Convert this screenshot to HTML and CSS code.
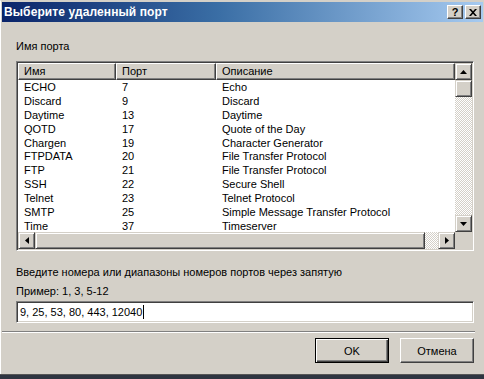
FILE: index.html
```html
<!DOCTYPE html>
<html lang="ru">
<head>
<meta charset="utf-8">
<title>Выберите удаленный порт</title>
<link rel="stylesheet" href="styles.css">
</head>
<body>
<div class="window">
  <div class="titlebar">
    <span class="title">Выберите удаленный порт</span>
    <div class="tbtns">
      <span class="tbtn help">?</span>
      <span class="tbtn close">
        <svg width="8" height="7" viewBox="0 0 8 7"><path d="M0 0h2l2 2.2L6 0h2L5 3.5 8 7H6L4 4.8 2 7H0l3-3.5z" fill="#000"/></svg>
      </span>
    </div>
  </div>
  <div class="content">
    <div class="label first">Имя порта</div>
    <div class="listbox">
      <div class="listarea">
        <div class="grid">
          <div class="hdr">Имя</div><div class="hdr">Порт</div><div class="hdr">Описание</div>
          <div>ECHO</div><div>7</div><div>Echo</div>
          <div>Discard</div><div>9</div><div>Discard</div>
          <div>Daytime</div><div>13</div><div>Daytime</div>
          <div>QOTD</div><div>17</div><div>Quote of the Day</div>
          <div>Chargen</div><div>19</div><div>Character Generator</div>
          <div>FTPDATA</div><div>20</div><div>File Transfer Protocol</div>
          <div>FTP</div><div>21</div><div>File Transfer Protocol</div>
          <div>SSH</div><div>22</div><div>Secure Shell</div>
          <div>Telnet</div><div>23</div><div>Telnet Protocol</div>
          <div>SMTP</div><div>25</div><div>Simple Message Transfer Protocol</div>
          <div>Time</div><div>37</div><div>Timeserver</div>
        </div>
        <div class="vscroll">
          <div class="sbtn"><svg width="7" height="4" viewBox="0 0 7 4"><path d="M3.5 0L7 4H0z" fill="#000"/></svg></div>
          <div class="sthumb"></div>
          <div class="strack"></div>
          <div class="sbtn"><svg width="7" height="4" viewBox="0 0 7 4"><path d="M0 0h7L3.5 4z" fill="#000"/></svg></div>
        </div>
      </div>
      <div class="hrow">
        <div class="hscroll">
          <div class="sbtn"><svg width="4" height="7" viewBox="0 0 4 7"><path d="M4 0v7L0 3.5z" fill="#000"/></svg></div>
          <div class="hthumb"></div>
          <div class="htrack"></div>
          <div class="sbtn"><svg width="4" height="7" viewBox="0 0 4 7"><path d="M0 0l4 3.5L0 7z" fill="#000"/></svg></div>
        </div>
        <div class="corner"></div>
      </div>
    </div>
    <div class="label second">Введите номера или диапазоны номеров портов через запятую</div>
    <div class="label third">Пример: 1, 3, 5-12</div>
    <div class="input"><span>9, 25, 53, 80, 443, 12040</span><span class="caret"></span></div>
  </div>
  <div class="separator"></div>
  <div class="buttons">
    <div class="btn default"><span>OK</span></div>
    <div class="btn"><span>Отмена</span></div>
  </div>
</div>
<div class="taskbar"></div>
</body>
</html>
```
FILE: styles.css
```css
* { box-sizing: border-box; }
html, body { margin: 0; padding: 0; }
body {
  width: 484px;
  height: 379px;
  overflow: hidden;
  background: #d4d0c8;
  font-family: "Liberation Sans", Arial, sans-serif;
  font-size: 11px;
  color: #000;
}
.window {
  height: 374px;
  background: #d4d0c8;
  border-top: 1px solid #d4d0c8;
  border-left: 1px solid #fff;
  display: flex;
  flex-direction: column;
}
.titlebar {
  margin: 1px 1px 0 1px;
  height: 20px;
  background: linear-gradient(to right, #0a246a 0%, #3a6ea5 45%, #a6caf0 100%);
  display: flex;
  align-items: center;
  justify-content: space-between;
  padding: 0 2px 0 2px;
}
.title {
  color: #fff;
  font-family: "Liberation Sans", Arial, sans-serif;
  font-weight: bold;
  font-size: 12px;
  letter-spacing: 0.1px;
}
.tbtns { display: flex; gap: 2px; }
.tbtn {
  width: 16px;
  height: 14px;
  background: #d4d0c8;
  border: 1px solid;
  border-color: #fff #404040 #404040 #fff;
  box-shadow: inset -1px -1px 0 #808080;
  display: flex;
  align-items: center;
  justify-content: center;
  font-weight: bold;
  font-size: 11px;
  line-height: 1;
}
.content { padding: 0 9px 0 15px; }
.label { height: 13px; line-height: 13px; white-space: nowrap; }
.label.first { margin-top: 18px; }
.listbox {
  margin-top: 8px;
  width: 458px;
  height: 190px;
  border: 1px solid;
  border-color: #808080 #fff #fff #808080;
  box-shadow: inset 1px 1px 0 #404040, inset -1px -1px 0 #d4d0c8;
  padding: 1px;
  background: #fff;
  display: flex;
  flex-direction: column;
}
.listarea { flex: 1; display: flex; overflow: hidden; }
.grid {
  flex: 1;
  display: grid;
  grid-template-columns: 98px 100px 1fr;
  grid-auto-rows: 13.9px;
  align-content: start;
  overflow: hidden;
  white-space: nowrap;
}
.grid > div { padding-left: 6px; line-height: 14px; overflow: hidden; }
.grid > .hdr {
  height: 17px;
  line-height: 15px;
  background: #d4d0c8;
  border: 1px solid;
  border-color: #fff #404040 #404040 #fff;
  box-shadow: inset -1px -1px 0 #808080;
  padding-left: 5px;
}
.grid { grid-template-rows: 17px; }
.vscroll {
  width: 17px;
  display: flex;
  flex-direction: column;
}
.sbtn {
  width: 17px;
  height: 17px;
  flex: none;
  background: #d4d0c8;
  border: 1px solid;
  border-color: #d4d0c8 #404040 #404040 #d4d0c8;
  box-shadow: inset 1px 1px 0 #fff, inset -1px -1px 0 #808080;
  display: flex;
  align-items: center;
  justify-content: center;
}
.sthumb, .hthumb {
  flex: none;
  background: #d4d0c8;
  border: 1px solid;
  border-color: #d4d0c8 #404040 #404040 #d4d0c8;
  box-shadow: inset 1px 1px 0 #fff, inset -1px -1px 0 #808080;
}
.sthumb { height: 17px; }
.strack, .htrack {
  flex: 1;
  background: repeating-conic-gradient(#d4d0c8 0 25%, #fff 0 50%) 0 0 / 2px 2px;
}
.hrow { display: flex; height: 17px; flex: none; }
.hscroll { flex: 1; display: flex; }
.hthumb { width: 390px; height: 17px; }
.corner { width: 17px; background: #d4d0c8; }
.label.second { margin-top: 15px; }
.label.third { margin-top: 6px; }
.input {
  margin-top: 3px;
  width: 458px;
  height: 22px;
  background: #fff;
  border: 1px solid;
  border-color: #808080 #fff #fff #808080;
  box-shadow: inset 1px 1px 0 #404040, inset -1px -1px 0 #d4d0c8;
  display: flex;
  align-items: center;
  padding-left: 3px;
  white-space: nowrap;
}
.caret { width: 1px; height: 14px; background: #000; margin-left: 1px; }
.separator {
  margin: 8px 9px 0 1px;
  height: 2px;
  border-top: 1px solid #808080;
  border-bottom: 1px solid #fff;
}
.buttons {
  display: flex;
  justify-content: flex-end;
  gap: 11px;
  padding-right: 10px;
  margin-top: 5px;
}
.btn {
  width: 74px;
  height: 25px;
  background: #d4d0c8;
  border: 1px solid;
  border-color: #fff #404040 #404040 #fff;
  box-shadow: inset -1px -1px 0 #808080;
  display: flex;
  align-items: center;
  justify-content: center;
}
.btn.default {
  border: 1px solid #000;
  box-shadow: inset 1px 1px 0 #fff, inset -1px -1px 0 #404040, inset -2px -2px 0 #808080;
}
.taskbar {
  height: 5px;
  background: #2e3440;
  border-top: 1px solid #555;
}
```
